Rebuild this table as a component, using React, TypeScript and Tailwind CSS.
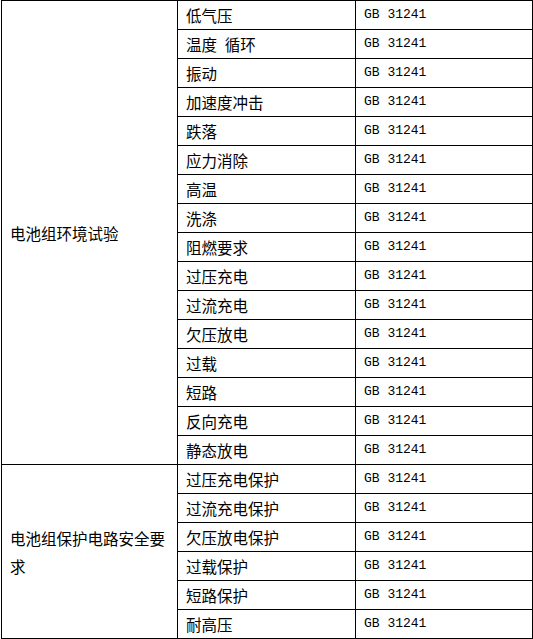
const envTests = [
  '低气压',
  '温度\u2002循环',
  '振动',
  '加速度冲击',
  '跌落',
  '应力消除',
  '高温',
  '洗涤',
  '阻燃要求',
  '过压充电',
  '过流充电',
  '欠压放电',
  '过载',
  '短路',
  '反向充电',
  '静态放电',
]

const protectTests = ['过压充电保护', '过流充电保护', '欠压放电保护', '过载保护', '短路保护', '耐高压']

const groups = [
  { name: '电池组环境试验', items: envTests },
  { name: '电池组保护电路安全要求', items: protectTests },
]

const cjk = { fontFamily: '"Noto Sans CJK SC", "Noto Sans", sans-serif' }
const mono = { fontFamily: '"Liberation Mono", "DejaVu Sans Mono", monospace' }

export default function App() {
  return (
    <div className="bg-white w-[533px] h-[639px]">
      <table className="ml-px table-fixed border-collapse text-black text-[15.5px] w-[531px]" style={cjk}>
        <colgroup>
          <col className="w-[176px]" />
          <col className="w-[178px]" />
          <col className="w-[177px]" />
        </colgroup>
        <tbody>
          {groups.map((g) =>
            g.items.map((item, i) => (
              <tr key={g.name + item} className="h-[29px]">
                {i === 0 && (
                  <td
                    rowSpan={g.items.length}
                    className="border border-black px-2 align-middle leading-[28px]"
                  >
                    {g.name}
                  </td>
                )}
                <td className="border border-black px-2 py-0 leading-[28px] whitespace-pre">{item}</td>
                <td className="border border-black px-2 py-0 leading-[28px] text-[13px]" style={mono}>
                  GB 31241
                </td>
              </tr>
            )),
          )}
        </tbody>
      </table>
    </div>
  )
}
